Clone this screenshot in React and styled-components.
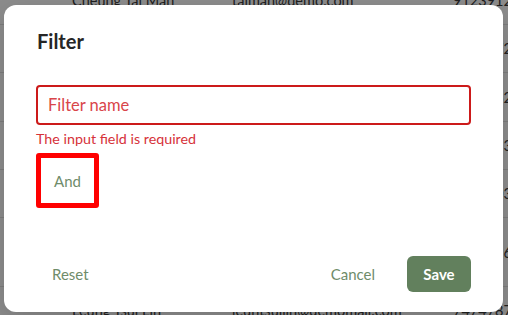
import React from "react";
import styled, { createGlobalStyle } from "styled-components";

const Global = createGlobalStyle`
  html, body { margin: 0; padding: 0; }
  body {
    width: 508px;
    height: 315px;
    overflow: hidden;
    font-family: "Lato", "Noto Sans", sans-serif;
    background: #ffffff;
  }
`;

const Page = styled.div`
  position: relative;
  width: 508px;
  height: 315px;
  overflow: hidden;
`;

const Table = styled.div`
  display: flex;
  flex-direction: column;
  margin-top: -24px;
`;

const Row = styled.div`
  display: grid;
  grid-template-columns: 160px 221px 1fr;
  align-items: center;
  height: ${(p) => p.$h}px;
  padding-left: 72px;
  border-bottom: 1px solid #e2e2e2;
  box-sizing: border-box;
  font-size: 14.5px;
  color: #3a3a3a;
  white-space: nowrap;
`;

const Overlay = styled.div`
  position: absolute;
  inset: 0;
  background: rgba(0, 0, 0, 0.45);
`;

const Dialog = styled.div`
  position: absolute;
  left: 4px;
  top: 5px;
  width: 499px;
  height: 307px;
  box-sizing: border-box;
  background: #fff;
  border-radius: 12px;
  padding: 22px 32px 20px 32px;
  display: flex;
  flex-direction: column;
  box-shadow: 0 8px 24px rgba(0, 0, 0, 0.15);
`;

const Title = styled.h2`
  margin: 0;
  font-size: 20px;
  line-height: 28px;
  font-weight: 700;
  color: #262626;
  padding-left: 1px;
`;

const Input = styled.input`
  margin-top: 30px;
  height: 40px;
  box-sizing: border-box;
  width: 100%;
  border: 2px solid #cc1a1a;
  border-radius: 4px;
  padding: 0 10px;
  font-family: inherit;
  font-size: 16.5px;
  outline: none;
  &::placeholder {
    color: #d9454a;
  }
`;

const ErrorText = styled.div`
  margin-top: 4px;
  height: 20px;
  line-height: 20px;
  font-size: 14.3px;
  color: #d6323a;
`;

const AndButton = styled.button`
  margin-top: 4px;
  width: 63px;
  height: 55px;
  box-sizing: border-box;
  border: 5px solid #ff0000;
  border-radius: 3px;
  background: #fff;
  color: #6f8c6a;
  font-family: inherit;
  font-size: 15px;
  padding: 0;
  align-self: flex-start;
`;

const Footer = styled.div`
  margin-top: auto;
  display: flex;
  align-items: center;
  gap: 16px;
`;

const TextButton = styled.button`
  height: 36px;
  padding: 0 16px;
  border: none;
  background: transparent;
  color: #6f8c6a;
  font-family: inherit;
  font-size: 15px;
  border-radius: 6px;
  margin-right: ${(p) => (p.$push ? "auto" : "0")};
`;

const SaveButton = styled.button`
  height: 36px;
  width: 64px;
  border: none;
  border-radius: 6px;
  background: #62805d;
  color: #fff;
  font-family: inherit;
  font-weight: 700;
  font-size: 15px;
`;

const rows = [
  { name: "Cheung Tai Man", email: "taiman@demo.com", phone: "91239124", h: 49 },
  { name: "Wong Ka Yan", email: "kayan@demo.com", phone: "62345728", h: 48 },
  { name: "Lee Chi Keung", email: "chikeung@demo.com", phone: "53826621", h: 49 },
  { name: "Ho Wai Ling", email: "wailing@demo.com", phone: "68234537", h: 48 },
  { name: "Lam Kin Wah", email: "kinwah@demo.com", phone: "97152033", h: 48 },
  { name: "Tam Mei Ki", email: "meiki@demo.com", phone: "66812964", h: 69 },
  { name: "Leung Tsui Lin", email: "leuntsuilin@demomail.com", phone: "74747874", h: 48 },
];

export default function App() {
  return (
    <Page>
      <Global />
      <Table>
        {rows.map((r) => (
          <Row key={r.name} $h={r.h}>
            <span>{r.name}</span>
            <span>{r.email}</span>
            <span>{r.phone}</span>
          </Row>
        ))}
      </Table>
      <Overlay />
      <Dialog>
        <Title>Filter</Title>
        <Input placeholder="Filter name" />
        <ErrorText>The input field is required</ErrorText>
        <AndButton>And</AndButton>
        <Footer>
          <TextButton $push>Reset</TextButton>
          <TextButton>Cancel</TextButton>
          <SaveButton>Save</SaveButton>
        </Footer>
      </Dialog>
    </Page>
  );
}
